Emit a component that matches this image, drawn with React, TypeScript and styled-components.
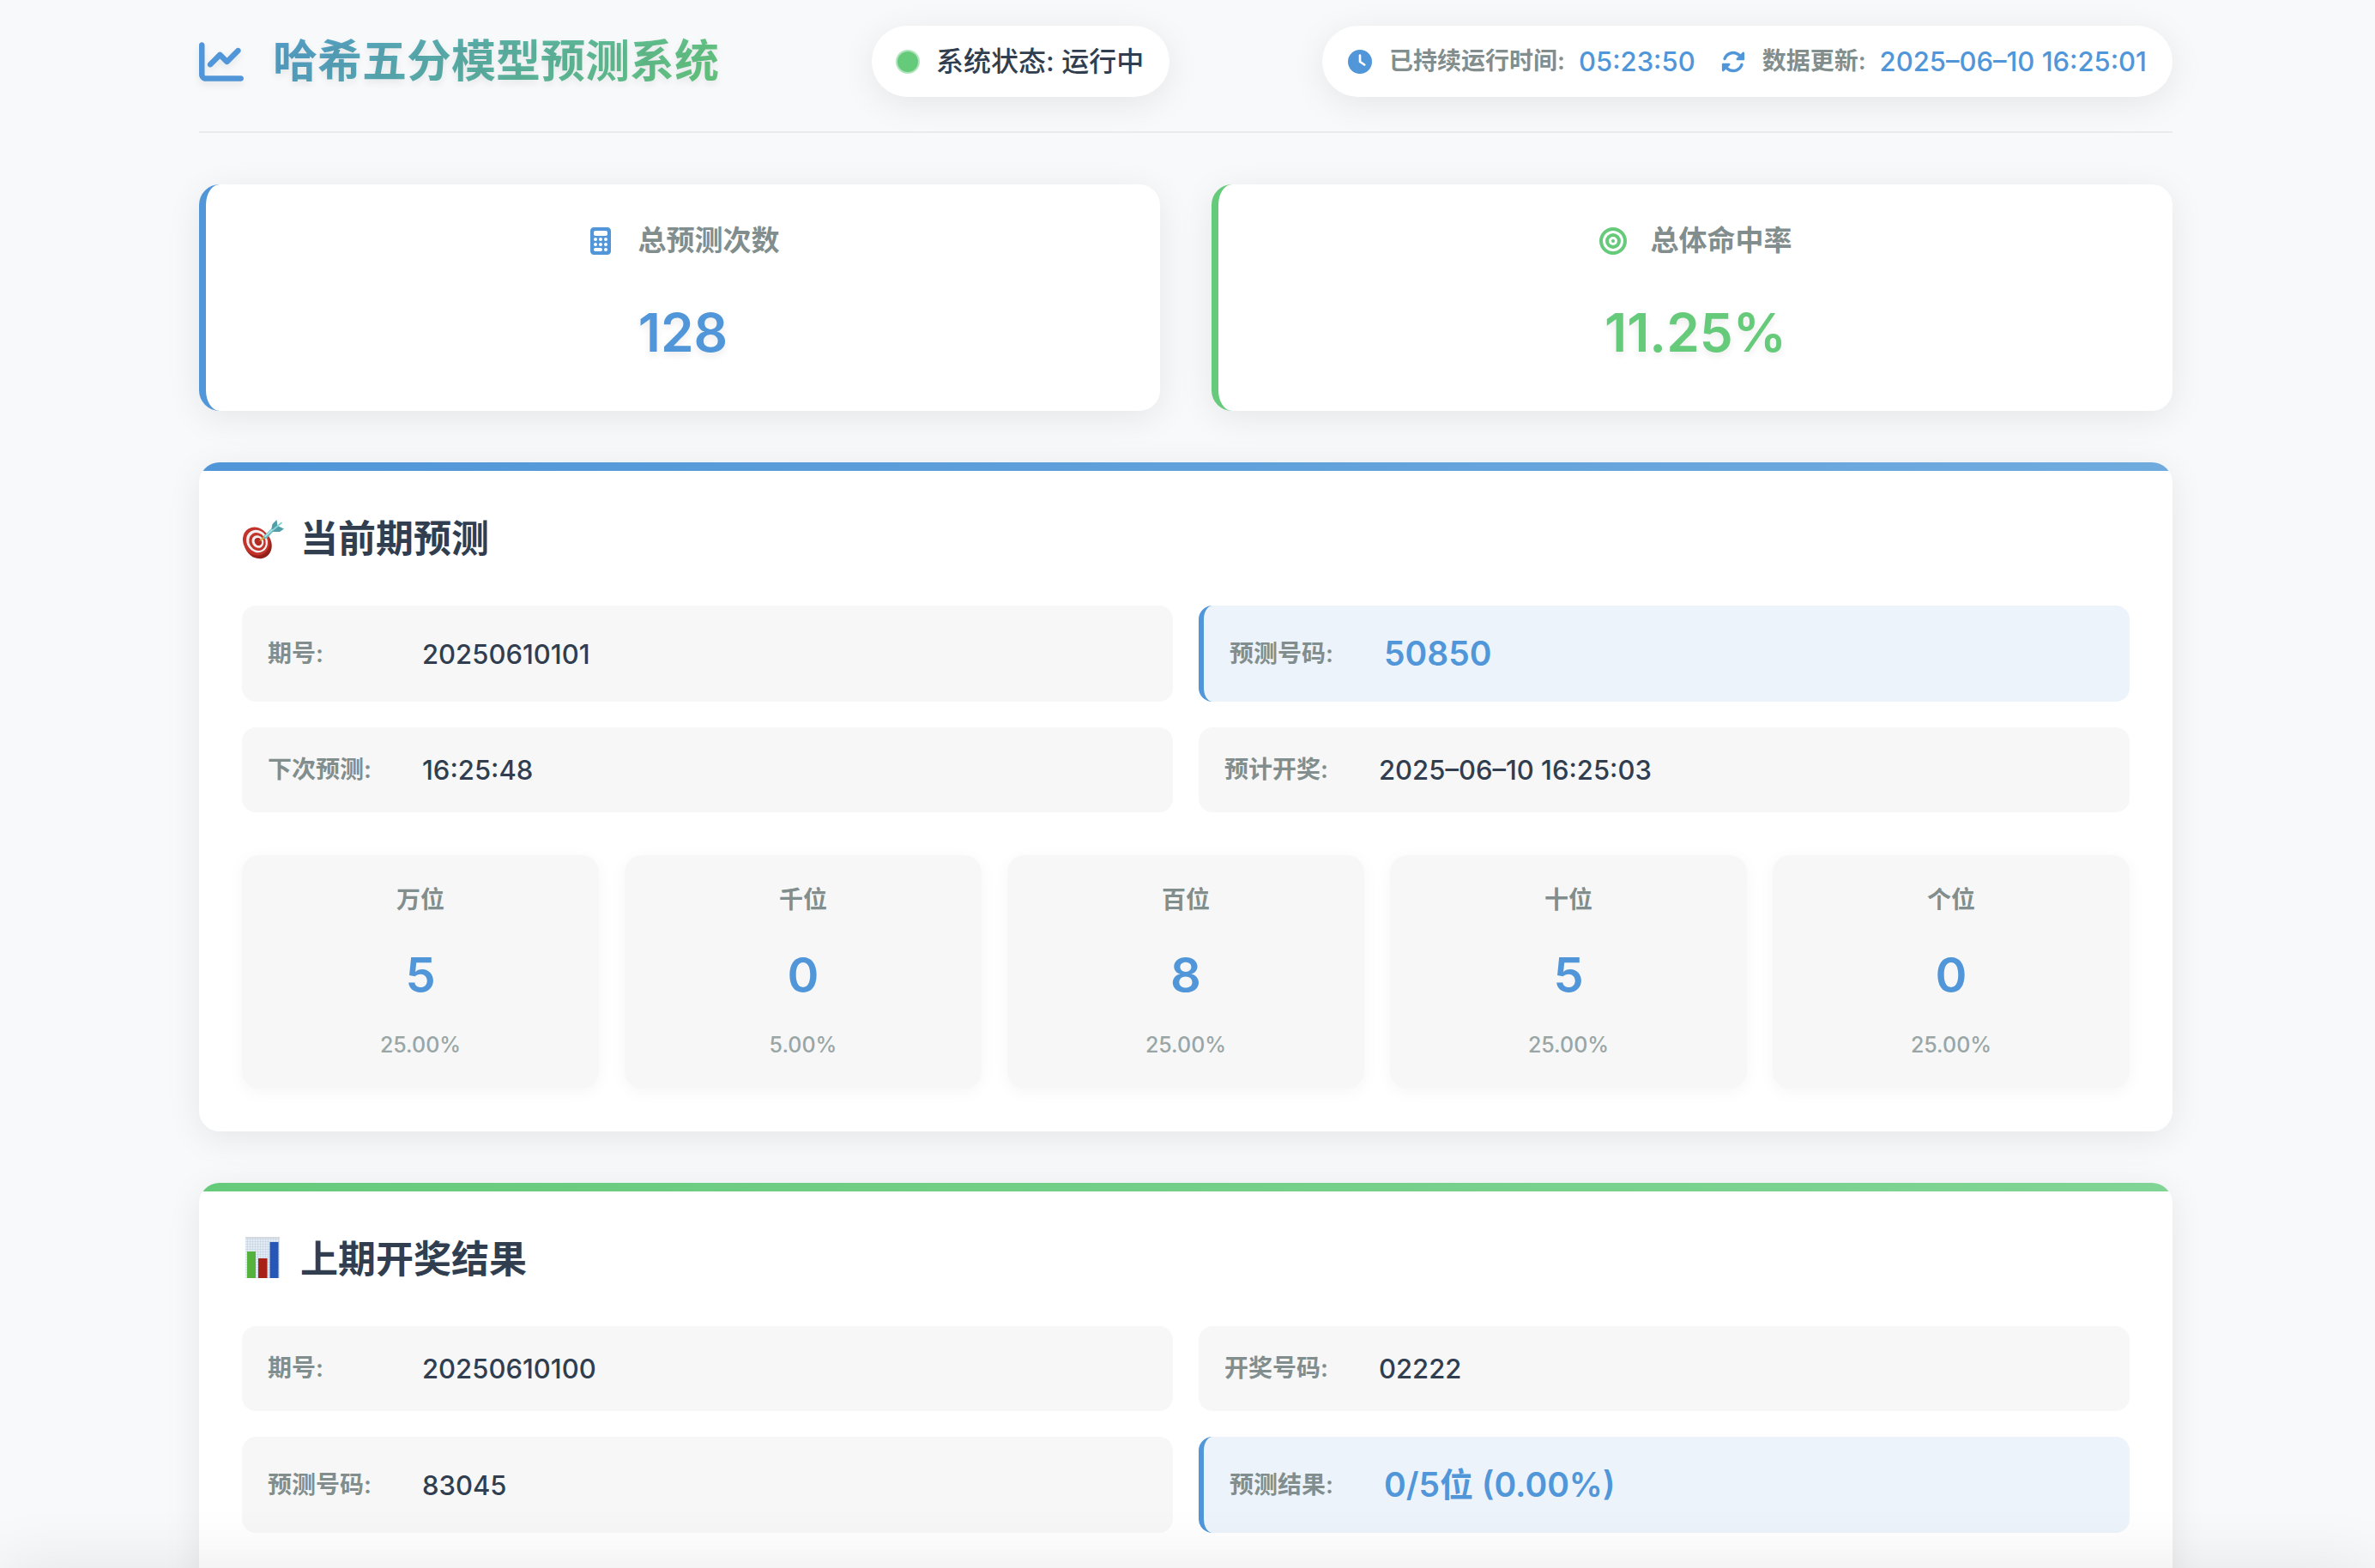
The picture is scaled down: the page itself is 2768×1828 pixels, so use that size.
import React from "react";
import styled, { createGlobalStyle, css } from "styled-components";
import {
  FaBullseye,
  FaCalculator,
  FaChartLine,
  FaClock,
  FaRotate,
} from "react-icons/fa6";

const color = {
  blue: "#5096d8",
  blueLight: "#70abde",
  green: "#66ca7b",
  greenLight: "#80d495",
  ink: "#303e50",
  muted: "#818e8d",
  faint: "#99a6a5",
  page: "#f8f9fb",
  tile: "#f7f7f7",
  highlight: "#ecf3fb",
};

type Accent = "blue" | "green";

const GlobalStyle = createGlobalStyle`
  *, *::before, *::after { box-sizing: border-box; }
  body {
    margin: 0;
    background: ${color.page};
    color: ${color.ink};
    font-family: Inter, "Noto Sans CJK SC", sans-serif;
    font-size: 32px;
    font-weight: 500;
    line-height: 51px;
  }
  h1, h2, h3, p, dl, dd, ul { margin: 0; padding: 0; }
`;

const Page = styled.div`
  height: 100vh;
  overflow-y: auto;
  scrollbar-width: none;
  padding: 30px 4px 60px 0;
`;

const Container = styled.div`
  display: flex;
  flex-direction: column;
  gap: 60px;
  max-width: 2300px;
  margin: 0 auto;
`;

const Header = styled.header`
  display: flex;
  align-items: center;
  justify-content: space-between;
  padding-bottom: 40px;
  border-bottom: 2px solid #e9ebed;
`;

const Logo = styled.h1`
  display: flex;
  align-items: center;
  gap: 34px;
  font-size: 52px;
  font-weight: 600;
  line-height: 83px;
  color: transparent;
  background: linear-gradient(135deg, ${color.blue}, ${color.green});
  background-clip: text;
  -webkit-background-clip: text;
  text-shadow: 0 4px 8px rgba(0, 0, 0, 0.08);

  svg {
    color: ${color.blue};
    filter: drop-shadow(0 4px 4px rgba(0, 0, 0, 0.08));
  }
`;

const Pill = styled.div`
  display: flex;
  align-items: center;
  gap: 30px;
  padding: 16px 30px;
  border-radius: 42px;
  background: #fff;
  box-shadow: 0 8px 40px rgba(0, 0, 0, 0.08);
`;

const Status = styled.p`
  display: flex;
  align-items: center;
  gap: 21px;
`;

const StatusDot = styled.span`
  width: 24px;
  height: 24px;
  border-radius: 50%;
  background: ${color.green};
  box-shadow: 0 0 0 2px rgba(102, 202, 123, 0.5);
`;

const Meta = styled.p`
  display: flex;
  align-items: center;
  color: ${color.blue};
  font-size: 28px;
`;

const MetaLabel = styled.span`
  margin: 0 16px 0 20px;
  color: ${color.muted};
  font-size: 28px;
  font-weight: 600;
`;

const MetaValue = styled.span`
  font-size: 31px;
`;

const Stats = styled.div`
  display: grid;
  grid-template-columns: 1fr 1fr;
  gap: 60px;
`;

const StatCard = styled.section<{ $accent: Accent }>`
  display: flex;
  flex-direction: column;
  align-items: center;
  gap: 31px;
  padding: 40px;
  border-left: 8px solid ${(p) => color[p.$accent]};
  border-radius: 24px;
  background: #fff;
  box-shadow: 0 8px 40px rgba(0, 0, 0, 0.08);
  color: ${(p) => color[p.$accent]};
`;

const StatTitle = styled.h3`
  display: flex;
  align-items: center;
  gap: 28px;
  font-size: 33px;
  font-weight: 600;
  line-height: 51px;

  svg {
    width: auto;
    height: 32px;
  }

  span {
    color: ${color.muted};
  }
`;

const StatValue = styled.p`
  font-size: 62px;
  font-weight: 600;
  line-height: 102px;
  text-shadow: 0 4px 8px rgba(0, 0, 0, 0.08);
`;

const Panel = styled.section<{ $accent: Accent }>`
  position: relative;
  overflow: hidden;
  min-height: 500px;
  padding: 50px;
  border-radius: 24px;
  background: #fff;

  &::before {
    content: "";
    position: absolute;
    inset: 0 0 auto 0;
    height: 10px;
    background: linear-gradient(
      135deg,
      ${(p) => color[p.$accent]},
      ${(p) => (p.$accent === "blue" ? color.blueLight : color.greenLight)}
    );
  }
`;

const PanelShadow = styled.div`
  border-radius: 24px;
  box-shadow: 0 8px 40px rgba(0, 0, 0, 0.08);
`;

const PanelTitle = styled.h2`
  display: flex;
  align-items: center;
  gap: 18px;
  margin-bottom: 38px;
  font-size: 44px;
  font-weight: 600;
  line-height: 79px;
`;

const InfoGrid = styled.dl`
  display: grid;
  grid-template-columns: 1fr 1fr;
  gap: 30px;
`;

const InfoItem = styled.div<{ $highlight?: boolean }>`
  display: flex;
  align-items: center;
  padding: 24px 30px;
  border-radius: 16px;
  background: ${color.tile};

  dt {
    width: 180px;
    color: ${color.muted};
    font-size: 28px;
    font-weight: 600;
  }

  dd {
    font-size: 31px;
  }

  ${(p) =>
    p.$highlight &&
    css`
      border-left: 6px solid ${color.blue};
      background: ${color.highlight};

      dd {
        color: ${color.blue};
        font-size: 39px;
        font-weight: 600;
        line-height: 64px;
      }
    `}
`;

const DigitList = styled.ul`
  display: grid;
  grid-template-columns: repeat(5, 1fr);
  gap: 30px;
  margin-top: 50px;
  list-style: none;
`;

const DigitCard = styled.li`
  padding: 30px;
  border-radius: 20px;
  background: ${color.tile};
  box-shadow: 0 4px 20px rgba(0, 0, 0, 0.04);
  text-align: center;
`;

const DigitLabel = styled.h3`
  color: ${color.muted};
  font-size: 28px;
  font-weight: 600;
  line-height: 45px;
`;

const DigitValue = styled.p`
  margin: 20px 0 15px;
  color: ${color.blue};
  font-size: 56px;
  font-weight: 600;
  line-height: 90px;
`;

const DigitRate = styled.p`
  color: ${color.faint};
  font-size: 25px;
  line-height: 42px;
`;

/* Docked below the fold; only its shadow reaches into the window. */
const Dock = styled.div`
  position: fixed;
  inset: 100% 0 auto 0;
  height: 120px;
  background: #fff;
  box-shadow: 0 0 80px rgba(0, 0, 0, 0.09);
`;

const DartIcon = () => (
  <svg width="50" height="50" viewBox="0 0 50 50" aria-hidden="true">
    <defs>
      <linearGradient id="dartRim" x1="0" y1="0" x2="0" y2="1">
        <stop offset="0" stopColor="#c9352b" />
        <stop offset="1" stopColor="#8f1d17" />
      </linearGradient>
    </defs>
    <ellipse cx="18.500" cy="30" rx="15.500" ry="18" transform="rotate(-32 18.500 30)" fill="url(#dartRim)" />
    <ellipse cx="16.500" cy="27" rx="15" ry="17" transform="rotate(-32 16.500 27)" fill="#c2342b" />
    <ellipse cx="17.500" cy="27" rx="12" ry="13.600" transform="rotate(-32 17.500 27)" fill="#f3efee" />
    <ellipse cx="18" cy="27.500" rx="9.400" ry="10.800" transform="rotate(-32 18 27.500)" fill="#c2342b" />
    <ellipse cx="18.400" cy="27.500" rx="6.600" ry="7.600" transform="rotate(-32 18.400 27.500)" fill="#f3efee" />
    <ellipse cx="18.800" cy="27.500" rx="4" ry="4.800" transform="rotate(-32 18.800 27.500)" fill="#b32820" />
    <path d="M19.500 27.500 26 20l2.500 2.600Z" fill="#d9a531" />
    <path d="M25 21.500 33 13.500 39 10 36.500 15.500 29 23.500C27 24.500 24.500 23.500 25 21.500Z" fill="#67b9c0" />
    <path d="M34 14 35.500 7 40.500 2 41.500 9 49 12.500 44 16 36.500 16Z" fill="#4f9ea8" />
    <path d="M36 14 46 5.500" stroke="#8ad3d8" strokeWidth="1.800" strokeLinecap="round" />
    <path d="M27 21.500 35 13.800" stroke="#b4e6e8" strokeWidth="1.600" strokeLinecap="round" />
  </svg>
);

const BarsIcon = () => (
  <svg width="50" height="56" viewBox="0 0 50 56" aria-hidden="true">
    <defs>
      <pattern id="barsGrid" width="3" height="3" patternUnits="userSpaceOnUse">
        <path d="M0 .5H3M.5 0V3" stroke="#c5d2e0" strokeWidth=".6" />
      </pattern>
    </defs>
    <rect x="4" y="1" width="40" height="48" fill="#e3ecf5" />
    <rect x="4" y="1" width="40" height="48" fill="url(#barsGrid)" />
    <rect x="4" y="1" width="40" height="1.500" fill="#d3d6da" />
    <rect x="6" y="18" width="10" height="31" fill="#54b23d" />
    <rect x="19" y="26" width="10.500" height="23" fill="#a82118" />
    <rect x="32.500" y="7" width="10" height="42" fill="#2657b8" />
  </svg>
);

interface Info {
  label: string;
  value: string;
  highlight?: boolean;
}

const currentInfo: Info[] = [
  { label: "期号:", value: "20250610101" },
  { label: "预测号码:", value: "50850", highlight: true },
  { label: "下次预测:", value: "16:25:48" },
  { label: "预计开奖:", value: "2025–06–10 16:25:03" },
];

const previousInfo: Info[] = [
  { label: "期号:", value: "20250610100" },
  { label: "开奖号码:", value: "02222" },
  { label: "预测号码:", value: "83045" },
  { label: "预测结果:", value: "0/5位 (0.00%)", highlight: true },
];

const digits = [
  { label: "万位", value: "5", rate: "25.00%" },
  { label: "千位", value: "0", rate: "5.00%" },
  { label: "百位", value: "8", rate: "25.00%" },
  { label: "十位", value: "5", rate: "25.00%" },
  { label: "个位", value: "0", rate: "25.00%" },
];

const InfoTable = ({ items }: { items: Info[] }) => (
  <InfoGrid>
    {items.map((item) => (
      <InfoItem key={item.label} $highlight={item.highlight}>
        <dt>{item.label}</dt>
        <dd>{item.value}</dd>
      </InfoItem>
    ))}
  </InfoGrid>
);

export default function App() {
  return (
    <>
      <GlobalStyle />
      <Page>
        <Container>
          <Header>
            <Logo>
              <FaChartLine />
              哈希五分模型预测系统
            </Logo>
            <Pill>
              <Status>
                <StatusDot />
                系统状态: 运行中
              </Status>
            </Pill>
            <Pill>
              <Meta>
                <FaClock />
                <MetaLabel>已持续运行时间:</MetaLabel>
                <MetaValue>05:23:50</MetaValue>
              </Meta>
              <Meta>
                <FaRotate />
                <MetaLabel>数据更新:</MetaLabel>
                <MetaValue>2025–06–10 16:25:01</MetaValue>
              </Meta>
            </Pill>
          </Header>

          <Stats>
            <StatCard $accent="blue">
              <StatTitle>
                <FaCalculator />
                <span>总预测次数</span>
              </StatTitle>
              <StatValue>128</StatValue>
            </StatCard>
            <StatCard $accent="green">
              <StatTitle>
                <FaBullseye />
                <span>总体命中率</span>
              </StatTitle>
              <StatValue>11.25%</StatValue>
            </StatCard>
          </Stats>

          <PanelShadow>
            <Panel $accent="blue">
              <PanelTitle>
                <DartIcon />
                当前期预测
              </PanelTitle>
              <InfoTable items={currentInfo} />
              <DigitList>
                {digits.map((digit) => (
                  <DigitCard key={digit.label}>
                    <DigitLabel>{digit.label}</DigitLabel>
                    <DigitValue>{digit.value}</DigitValue>
                    <DigitRate>{digit.rate}</DigitRate>
                  </DigitCard>
                ))}
              </DigitList>
            </Panel>
          </PanelShadow>

          <PanelShadow>
            <Panel $accent="green">
              <PanelTitle>
                <BarsIcon />
                上期开奖结果
              </PanelTitle>
              <InfoTable items={previousInfo} />
            </Panel>
          </PanelShadow>
        </Container>
      </Page>
      <Dock />
    </>
  );
}
